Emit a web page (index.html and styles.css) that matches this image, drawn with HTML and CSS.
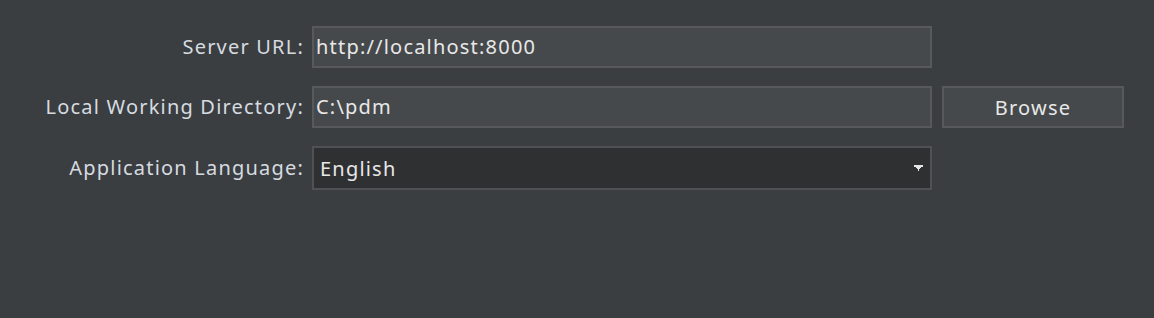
FILE: index.html
```html
<!DOCTYPE html>
<html>
<head>
<meta charset="utf-8">
<link rel="stylesheet" href="styles.css">
</head>
<body>
<div class="form">
  <label class="lbl">Server URL:</label>
  <div class="edit">http://localhost:8000</div>
  <div></div>

  <label class="lbl">Local Working Directory:</label>
  <div class="edit">C:\pdm</div>
  <div class="btn">Browse</div>

  <label class="lbl">Application Language:</label>
  <div class="combo"><span>English</span>
    <svg class="arrow" width="9" height="6" viewBox="0 0 9 6"><path d="M0 0H9V2H7V3H6V4H5V6H4V4H3V3H2V2H0Z" fill="#e6e6e6"/></svg>
  </div>
  <div></div>
</div>
</body>
</html>
```
FILE: styles.css
```css
html, body {
  margin: 0;
  padding: 0;
  background: #3b3e41;
  width: 1154px;
  height: 318px;
  overflow: hidden;
}
.form {
  display: grid;
  grid-template-columns: 303px 620px 183px;
  grid-template-rows: 42px 42px 44px;
  column-gap: 9px;
  row-gap: 18px;
  padding-top: 26px;
  font-family: "Noto Sans", "Open Sans", sans-serif;
  font-size: 20px;
  letter-spacing: 1.2px;
}
.lbl {
  display: flex;
  align-items: center;
  justify-content: flex-end;
  color: #d6dbe0;
  margin-right: -1px;
  padding-bottom: 1px;
}
.edit {
  box-sizing: border-box;
  border: 2px solid #58595b;
  background: #46494b;
  color: #e8e8e8;
  display: flex;
  align-items: center;
  padding-left: 2px;
  padding-bottom: 1px;
}
.btn {
  box-sizing: border-box;
  margin-left: 1px;
  border: 2px solid #58595b;
  background: #46494b;
  color: #e8e8e8;
  display: flex;
  align-items: center;
  justify-content: center;
}
.combo {
  box-sizing: border-box;
  border: 2px solid #505153;
  background: #2f3032;
  color: #e8e8e8;
  display: flex;
  align-items: center;
  justify-content: space-between;
  padding-left: 6px;
  padding-right: 7px;
}
.arrow {
  display: block;
}
```
